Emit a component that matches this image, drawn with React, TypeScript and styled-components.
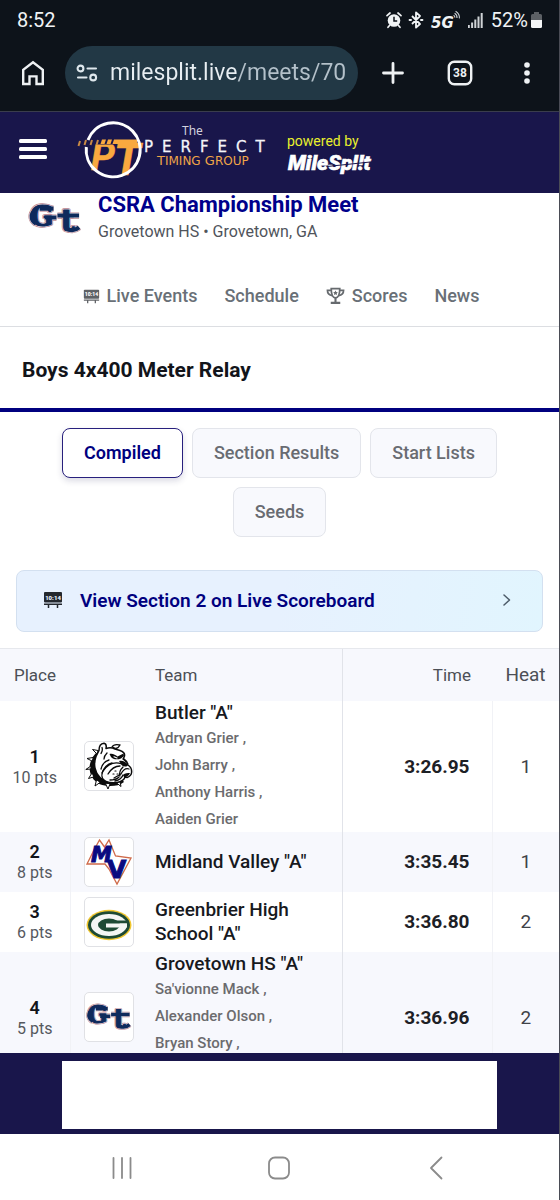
import React from 'react';
import styled, { createGlobalStyle, css } from 'styled-components';

const GlobalStyle = createGlobalStyle`
  *, *::before, *::after { box-sizing: border-box; }
  body { margin: 0; background: #fff; font-family: Roboto, "Liberation Sans", sans-serif; color: #12141a; }
  button, input { font: inherit; color: inherit; }
  svg { display: block; flex: none; }
`;

const Screen = styled.div`
  display: flex;
  flex-direction: column;
  height: 100vh;
  overflow: hidden;
  border-right: 1px solid #4a4c55;
`;

/* ---------- phone and browser chrome ---------- */

const Chrome = styled.header`
  flex: none;
  background: #0d131a;
  color: #f0f3f5;
  border-bottom: 1px solid #3a3d4c;
`;

const StatusBar = styled.div`
  display: flex;
  align-items: center;
  justify-content: space-between;
  height: 40px;
  padding: 0 16px 0 17px;
  font-size: 20px;
`;

const StatusIcons = styled.div`
  display: flex;
  align-items: center;
  gap: 6px;
`;

const BatteryGroup = styled.span`
  display: flex;
  align-items: center;
  gap: 2px;
  padding-left: 2px;
`;

const BrowserBar = styled.div`
  display: flex;
  align-items: center;
  height: 71px;
  padding: 0 16px 6px 17px;
`;

const IconButton = styled.button`
  display: flex;
  align-items: center;
  justify-content: center;
  width: 32px;
  height: 32px;
  padding: 0;
  border: 0;
  background: none;
`;

const AddressPill = styled.div`
  display: flex;
  flex: 1;
  align-items: center;
  gap: 12px;
  min-width: 0;
  height: 54px;
  margin: 0 19px 0 16px;
  padding: 0 10px 0 11px;
  border-radius: 27px;
  background: #223845;
`;

const Address = styled.input`
  flex: 1;
  min-width: 0;
  padding: 0;
  border: 0;
  outline: 0;
  font-size: 23px;
  line-height: 32px;
  color: transparent;
  background: linear-gradient(90deg, #e8eef2 127px, #b4c1ca 127px);
  background-clip: text;
  -webkit-background-clip: text;
`;

const BrowserActions = styled.div`
  display: flex;
  align-items: center;
  gap: 35px;
`;

/* ---------- site header ---------- */

const SiteHeader = styled.div`
  flex: none;
  display: flex;
  align-items: center;
  height: 81px;
  padding: 0 17px 7px;
  background: #19164b;
`;

const BrandLink = styled.a`
  margin-left: 28px;
`;

const Sponsor = styled.a`
  margin-left: 10px;
  padding-top: 13px;
  color: #fff;
  text-decoration: none;
`;

const SponsorNote = styled.span`
  display: block;
  font-size: 14px;
  line-height: 17px;
  color: #eaf02c;
`;

/* ---------- meet ---------- */

const Main = styled.main`
  flex: 1;
  min-height: 0;
  overflow: hidden;
`;

const Meet = styled.section`
  display: flex;
  align-items: center;
  gap: 15px;
  height: 52px;
  padding-left: 27px;
`;

const MeetName = styled.h1`
  margin: 0;
  font-size: 22px;
  line-height: 24px;
  font-weight: 700;
  color: #00008b;
`;

const MeetPlace = styled.p`
  margin: 0;
  padding: 4px 0 2px;
  font-size: 16px;
  line-height: 22px;
  color: #50545b;
`;

const Tabs = styled.nav`
  display: flex;
  align-items: center;
  justify-content: center;
  gap: 27px;
  height: 82px;
  padding: 21px 0 0 3px;
  border-bottom: 1px solid #dcdee2;
`;

const Tab = styled.a`
  display: flex;
  align-items: center;
  gap: 7px;
  font-size: 18px;
  line-height: 24px;
  font-weight: 500;
  color: #697077;
  text-decoration: none;
`;

const EventTitle = styled.h2`
  margin: 0;
  padding: 29px 22px 24px;
  border-bottom: 4px solid #00007f;
  font-size: 21px;
  line-height: 28px;
  font-weight: 700;
`;

const Views = styled.div`
  display: flex;
  flex-wrap: wrap;
  justify-content: center;
  gap: 9px;
  padding: 16px 16px 33px;
`;

const ViewButton = styled.button<{ $active?: boolean }>`
  height: 50px;
  padding: 0 21px 2px;
  border: 1px solid #e3e5eb;
  border-radius: 8px;
  background: #f8f9fd;
  font-size: 18px;
  font-weight: 500;
  color: #696c72;
  ${(p) =>
    p.$active &&
    css`
      border-color: #28207d;
      background: #fff;
      color: #00007f;
      font-weight: 600;
      box-shadow: 0 3px 6px rgba(30, 30, 90, 0.16);
    `}
`;

const LiveLink = styled.a`
  display: flex;
  align-items: center;
  gap: 17px;
  height: 62px;
  margin: 0 16px 16px;
  padding: 0 30px 2px 26px;
  border: 1px solid #d3e0f0;
  border-radius: 8px;
  background: linear-gradient(100deg, #e7f1fe 50%, #e1f5fe);
  font-size: 19px;
  font-weight: 600;
  color: #00007f;
  text-decoration: none;
`;

const LiveLabel = styled.span`
  flex: 1;
`;

/* ---------- results ---------- */

const Results = styled.table`
  width: 100%;
  border-collapse: collapse;
  table-layout: fixed;
`;

const Col = styled.col<{ $w?: number }>`
  ${(p) => p.$w && `width: ${p.$w}px;`}
`;

const HeadCell = styled.th<{ $align?: string; $size?: number; $ruled?: boolean }>`
  height: 52px;
  padding: 0 ${(p) => (p.$align === 'right' ? 21 : 0)}px 0 ${(p) => (p.$align === 'left' ? 8 : 0)}px;
  border-top: 1px solid #e6e8ed;
  border-left: ${(p) => (p.$ruled ? '1px solid #e1e3e9' : '0')};
  background: #f7f8fd;
  font-size: ${(p) => p.$size ?? 17}px;
  font-weight: 400;
  text-align: ${(p) => p.$align ?? 'center'};
  color: #4c4f56;
`;

const Row = styled.tr`
  height: 60px;
  &:nth-child(even) { background: #f7f8fd; }
`;

const Cell = styled.td<{ $rule?: 'soft' | 'firm' }>`
  padding: 0;
  text-align: center;
  font-size: 19px;
  color: #3f4248;
  border-left: ${(p) =>
    p.$rule === 'firm' ? '1px solid #e1e3e9' : p.$rule === 'soft' ? '1px solid #f1f2f6' : '0'};
`;

const TeamCell = styled(Cell)`
  padding-left: 8px;
  text-align: left;
`;

const TimeCell = styled(Cell)`
  padding-right: 22px;
  text-align: right;
  font-weight: 700;
  color: #1d2025;
`;

const Place = styled.div`
  padding-top: 3px;
  font-size: 18px;
  line-height: 20px;
  font-weight: 600;
  color: #12141a;
`;

const Points = styled.div`
  font-size: 16px;
  line-height: 22px;
  color: #55585e;
`;

const TeamName = styled.div`
  max-width: 160px;
  font-size: 19px;
  line-height: 24px;
  font-weight: 500;
  color: #17191e;
`;

const Runners = styled.ul`
  display: grid;
  gap: 1px;
  margin: 0;
  padding: 0;
  list-style: none;
  font-size: 15px;
  line-height: 26px;
  font-weight: 500;
  color: #6b6b6e;
`;

const LogoBox = styled.div`
  display: flex;
  align-items: center;
  justify-content: center;
  width: 50px;
  height: 50px;
  margin: 0 auto;
  border: 1px solid #e0e1e5;
  border-radius: 5px;
  background: #fff;
`;

/* ---------- bottom ---------- */

const AdBar = styled.aside`
  flex: none;
  padding: 8px 62px 5px;
  background: #19164b;
`;

const AdSlot = styled.div`
  height: 68px;
  background: #fff;
`;

const SystemNav = styled.nav`
  flex: none;
  display: grid;
  grid-template-columns: repeat(3, 1fr);
  justify-items: center;
  align-items: center;
  height: 66px;
  padding: 2px 43px 0;
  background: #fff;
  color: #8b8b8b;
`;

/* ---------- drawings ---------- */

const AlarmIcon = () => (
  <svg width="16" height="18" viewBox="0 0 16 18" fill="none">
    <circle cx="8" cy="9.5" r="6.3" fill="#f0f3f5" />
    <path d="M1 4.6 4 2M15 4.6 12 2M3.5 14.5 2 16.3M12.5 14.5l1.5 1.8" stroke="#f0f3f5" strokeWidth="1.7" strokeLinecap="round" />
    <path d="M8 5.8V10h3.2" stroke="#0d131a" strokeWidth="1.5" />
  </svg>
);

const BluetoothIcon = () => (
  <svg width="16" height="18" viewBox="0 0 16 18" fill="none" stroke="#f0f3f5" strokeWidth="1.8" strokeLinejoin="round">
    <path d="M4 5l8 8-4 3.600V1.400L12 5l-8 8" />
    <path d="M1.600 9h1.400M13 9h1.400" strokeLinecap="round" strokeWidth="2" />
  </svg>
);

const NetworkIcon = () => (
  <svg width="32" height="24" viewBox="0 0 32 24" fill="none">
    <text x="1" y="20" fontFamily="DejaVu Sans, sans-serif" fontWeight="700" fontStyle="italic" fontSize="15" fill="#f0f3f5">5G</text>
    <path d="M24.8 9.600a2.400 2.400 0 0 0-1.200-2.400M27 10a5 5 0 0 0-2.400-4.800M29.400 10.400a7.600 7.600 0 0 0-3.800-7.200" stroke="#cdd2d6" strokeWidth="1.1" />
  </svg>
);

const SignalIcon = () => (
  <svg width="15" height="18" viewBox="0 0 15 18" fill="#cfd3d6">
    <rect x="0" y="14" width="1.8" height="3" />
    <rect x="3.1" y="11.5" width="2" height="5.5" />
    <rect x="6.3" y="8.5" width="2" height="8.5" />
    <rect x="9.5" y="5.5" width="2" height="11.5" />
    <rect x="12.7" y="2" width="2" height="15" />
  </svg>
);

const BatteryIcon = () => (
  <svg width="13" height="18" viewBox="0 0 13 18">
    <path d="M4 1h5v2h1.5A1.5 1.5 0 0 1 12 4.500V9H1V4.500A1.5 1.5 0 0 1 2.500 3H4z" fill="#5c6065" />
    <path d="M1 9h11v6.500A1.500 1.500 0 0 1 10.500 17h-8A1.500 1.500 0 0 1 1 15.500z" fill="#f4f6f7" />
  </svg>
);

const HomeIcon = () => (
  <svg width="24" height="26" viewBox="0 0 24 26" fill="none" stroke="#eef1f3" strokeWidth="2.400">
    <path d="M2.200 24V9.800L12 2.300l9.800 7.500V24h-6.300v-7.600h-7V24z" />
  </svg>
);

const TuneIcon = () => (
  <svg width="22" height="18" viewBox="0 0 22 18" fill="none" stroke="#dfe8ed" strokeWidth="2.100" strokeLinecap="round">
    <circle cx="4.500" cy="4.500" r="2.900" />
    <path d="M11.500 4.500h8.500M2 13.500h8.500" />
    <circle cx="17.200" cy="13.500" r="2.900" />
  </svg>
);

const PlusIcon = () => (
  <svg width="24" height="24" viewBox="0 0 24 24" stroke="#eef1f3" strokeWidth="2.800" strokeLinecap="round">
    <path d="M12 2.500v19M2.500 12h19" />
  </svg>
);

const TabCountIcon = () => (
  <svg width="26" height="26" viewBox="0 0 26 26">
    <rect x="1.800" y="1.800" width="22.400" height="22.400" rx="5.500" fill="none" stroke="#eef1f3" strokeWidth="2.400" />
    <text x="13" y="17.200" textAnchor="middle" fontFamily="Roboto, sans-serif" fontWeight="700" fontSize="12" fill="#eef1f3">38</text>
  </svg>
);

const DotsIcon = () => (
  <svg width="8" height="24" viewBox="0 0 8 24" fill="#eef1f3">
    <circle cx="4" cy="4" r="2.800" />
    <circle cx="4" cy="12" r="2.800" />
    <circle cx="4" cy="20" r="2.800" />
  </svg>
);

const MenuIcon = () => (
  <svg width="32" height="24" viewBox="0 0 32 24" fill="#fff">
    <rect x="2" y="2" width="28" height="4" rx="1.500" />
    <rect x="2" y="10" width="28" height="4" rx="1.500" />
    <rect x="2" y="18" width="28" height="4" rx="1.500" />
  </svg>
);

const TimingLogo = () => (
  <svg width="200" height="72" viewBox="0 -8 200 72">
    <text x="14" y="49" fontFamily="Roboto, sans-serif" fontWeight="700" fontStyle="italic" fontSize="38" fill="#f9a93f" stroke="#f9a93f" strokeWidth="0.500">P</text>
    <text x="37" y="54" fontFamily="Roboto, sans-serif" fontWeight="700" fontStyle="italic" fontSize="44" fill="#f9a93f" stroke="#f9a93f" strokeWidth="0.500">T</text>
    <path d="M3 20.500h34" stroke="#19164b" strokeWidth="6" />
    <path d="M3 20l-1.500 5M9 19l-1.500 5M15 19l-1.500 5M21 19l-1.500 5" stroke="#c98a45" strokeWidth="2" />
    <path d="M25 18.500h4l-1.500 4.500h-4zM31 18.500h4l-1.500 4.500h-4zM37 18.500h24l-1.500 4.500H35.500z" fill="#f9a93f" />
    <path d="M9.300 26A27 27 0 1 0 11 19" fill="none" stroke="#fff" strokeWidth="3" />
    <text x="105" y="14" fontFamily="Noto Sans, sans-serif" fontSize="12" fill="#d3d2df">The</text>
    <text x="67" y="31" fontFamily="DejaVu Sans, sans-serif" fontSize="15" letterSpacing="9" fill="#f4f4f8" stroke="#f4f4f8" strokeWidth="0.300">PERFECT</text>
    <text x="80" y="44" fontFamily="DejaVu Sans, sans-serif" fontSize="13" fill="#f0a548">
      T<tspan fontSize="12">IMING</tspan> G<tspan fontSize="12">ROUP</tspan>
    </text>
  </svg>
);

const MileSplitLogo = () => (
  <svg width="96" height="28" viewBox="0 -2 96 28">
    <text x="1" y="18" fontFamily="Roboto, sans-serif" fontWeight="900" fontStyle="italic" fontSize="21" fill="#fff" stroke="#fff" strokeWidth="0.600">MileSpl!t</text>
    <path d="M40 14.500 88 9.500" stroke="#19164b" strokeWidth="1" />
  </svg>
);

/* One coloured layer of the Grovetown mark: the letters plus their long slab bars. */
const GtLayer = ({ color, spread }: { color: string; spread: number }) => (
  <g fill={color} stroke={color}>
    <g strokeWidth={spread}>
      <text x="2" y="23" fontSize="28">G</text>
      <text x="33" y="28" fontSize="31">t</text>
    </g>
    <g fill="none" strokeWidth={spread + 3}>
      <path d="M17 14.500h12M12 5.500h14M30 12.500h22" />
      <path d="M5 9c-2.500 4-1.500 9 3 11.500M41 26.500c4 1.500 8 .5 11-2" />
    </g>
  </g>
);

const GtLogo = ({ width }: { width: number }) => (
  <svg width={width} height={Math.round(width * 0.6)} viewBox="-1 -1 57 34" fontFamily="DejaVu Serif, serif" fontWeight="700" strokeLinejoin="round">
    <GtLayer color="#b9848f" spread={3.4} />
    <GtLayer color="#e9dde2" spread={2.2} />
    <GtLayer color="#0e2a5c" spread={1.2} />
  </svg>
);

const BulldogLogo = () => (
  <svg width="48" height="48" viewBox="0 0 48 48" strokeLinejoin="round" strokeLinecap="round">
    <path d="M13 9C5 16 2 26 7 35c4 7 11 9 18 9 6 0 10-1 14-4l-4-5-15 1-8-9z" fill="#0b0b0b" />
    <g fill="#fff" stroke="#0b0b0b" strokeWidth="1">
      <path d="M11.500 11.500 7.500 7.500 13 8.500z" />
      <path d="M7 19 2 16.500 8 15.500z" />
      <path d="M5.500 27 .8 27.500 6 24z" />
      <path d="M8.500 35 3.500 36.500 7 31z" />
      <path d="M15 40.500 10 44 11.500 38z" />
      <path d="M25 42 23 47 20.500 41.500z" />
      <path d="M35 39.500 36 44.500 31 40.500z" />
    </g>
    <path d="M14 8.500c0-4 2-7 5-7.300 2 .5 2.500 3 2 5.300 3-1 6-1 9 .5l5 1.500c3 1 5 3 4.500 5.500l-1 2.500c3 2 4 4 4.500 6.500 3 2 4 5 3.500 8-.5 3-3 4-4.500 4.500l-2-1c0 3-4 5.500-8 6-8 1-13-1-17-5-5-5-7-13-4-21z" fill="#fff" stroke="#0b0b0b" strokeWidth="1.500" />
    <path d="M27 5c2-3.500 5-2.500 8-2-1 2-2 3-4 3.500z" fill="#fff" stroke="#0b0b0b" strokeWidth="1.300" />
    <path d="M24.500 12c3-1 6 1 8 2.500l6-3 .5 2.500-3 2.500c-4 1.500-8 1-10-1.500z" fill="#0b0b0b" />
    <path d="M29 14.800 32 16" stroke="#fff" strokeWidth="1.200" />
    <path d="M34 19c4-1 7 1 9 4-1 2-4 2-6 .5z" fill="#0b0b0b" />
    <g fill="none" stroke="#0b0b0b" strokeWidth="1.300">
      <path d="M37 22c-8-3-14 0-19 7-2 4-1 8 2 10" />
      <path d="M35 24c-5 0-9 3-12 8M38 25c-3 3-4 6-3 9M44 27c-3-1-6 1-8 5l-7 4" />
      <path d="M17 5.500c1 3 0 4-1 6M22 11c-2 2-3 4-3 6M24 18c-4 1-7 5-8 9M27 21c-4 1-8 5-10 10" />
      <path d="M30 39c4-1 7-3 8-6M25 38c4 0 7-1 9-3M38 17c1 1 2 1 3 3" />
    </g>
    <path d="M30 29h1M28 32h1M32 32h1" stroke="#0b0b0b" strokeWidth="1.200" />
    <path d="M38 33c2-2 5-2 7-2-1 3-4 4-6 4z" fill="#0b0b0b" />
  </svg>
);

const MidlandLogo = () => (
  <svg width="48" height="48" viewBox="0 0 48 48">
    <path d="M2 26 9 12 14.500 2l5 7L24 2l6.500 16L46 20 32 46l-8-15-4-5z" fill="#fff" stroke="#cf6a49" strokeWidth="1.300" />
    <g fontFamily="DejaVu Sans, sans-serif" fontWeight="700" fill="#0a0a80" stroke="#0a0a80" strokeWidth="1">
      <text x="6" y="24" fontSize="21" fontStyle="italic">M</text>
      <text x="22" y="40" fontSize="25">V</text>
    </g>
  </svg>
);

const GreenbrierLogo = () => (
  <svg width="48" height="48" viewBox="0 0 48 48">
    <ellipse cx="24" cy="27" rx="22.500" ry="15.200" fill="#f0c62e" />
    <ellipse cx="24" cy="27" rx="21" ry="13.700" fill="#1d4a34" />
    <ellipse cx="24" cy="27" rx="18" ry="11" fill="#f4f6f4" />
    <ellipse cx="24" cy="27" rx="11" ry="6.500" fill="#1d4a34" />
    <rect x="30" y="22.500" width="13.500" height="3" fill="#1d4a34" />
    <rect x="21" y="25.500" width="21" height="4" fill="#f4f6f4" />
  </svg>
);

const ScoreboardIcon = ({ size, color, ground }: { size: number; color: string; ground: string }) => (
  <svg width={size} height={size} viewBox="0 0 20 20">
    <rect x="1" y="2" width="18" height="10.500" rx="1" fill={color} />
    <path d="M1 14.200h18M5.500 14v4M14.500 14v4" stroke={color} strokeWidth="1.500" />
    <text x="10" y="9.600" textAnchor="middle" fontFamily="Roboto, sans-serif" fontWeight="900" fontSize="6" fill={ground}>10:14</text>
  </svg>
);

const TrophyIcon = () => (
  <svg width="19" height="18" viewBox="0 0 20 18" fill="none" stroke="#666a6e" strokeWidth="1.800">
    <path d="M5.500 1.200h9c0 6-1.500 9.800-4.500 9.800S5.500 7.200 5.500 1.200z" />
    <path d="M5.700 3H1.500c0 3 2 5.200 5.200 5.500M14.300 3h4.200c0 3-2 5.200-5.200 5.500" />
    <path d="M10 11v4M5 16.200h10" strokeWidth="2.200" />
    <path d="m10 3.200.8 1.500 1.700.3-1.200 1.200.3 1.700-1.600-.8-1.600.8.300-1.700L7.500 5l1.700-.3z" fill="#666a6e" stroke="none" />
  </svg>
);

const ChevronIcon = () => (
  <svg width="10" height="14" viewBox="0 0 10 14" fill="none" stroke="#4c5a68" strokeWidth="1.500" strokeLinecap="round" strokeLinejoin="round">
    <path d="M2 2l5.500 5L2 12" />
  </svg>
);

const RecentsIcon = () => (
  <svg width="22" height="24" viewBox="0 0 22 24" stroke="currentColor" strokeWidth="1.800" strokeLinecap="round">
    <path d="M2.500 2v20M11 2v20M19.500 2v20" />
  </svg>
);

const HomeKeyIcon = () => (
  <svg width="24" height="24" viewBox="0 0 24 24" fill="none" stroke="currentColor" strokeWidth="1.800">
    <rect x="2" y="1.500" width="20" height="21" rx="6" />
  </svg>
);

const BackIcon = () => (
  <svg width="16" height="24" viewBox="0 0 16 24" fill="none" stroke="currentColor" strokeWidth="1.800" strokeLinecap="round" strokeLinejoin="round">
    <path d="M12.500 1.500 2 12l10.500 10.500" />
  </svg>
);

/* ---------- data ---------- */

type Result = {
  place: number;
  points: number;
  team: string;
  logo: React.ReactNode;
  runners?: string[];
  time: string;
  heat: number;
};

const results: Result[] = [
  { place: 1, points: 10, team: 'Butler "A"', logo: <BulldogLogo />, runners: ['Adryan Grier', 'John Barry', 'Anthony Harris', 'Aaiden Grier'], time: '3:26.95', heat: 1 },
  { place: 2, points: 8, team: 'Midland Valley "A"', logo: <MidlandLogo />, time: '3:35.45', heat: 1 },
  { place: 3, points: 6, team: 'Greenbrier High School "A"', logo: <GreenbrierLogo />, time: '3:36.80', heat: 2 },
  { place: 4, points: 5, team: 'Grovetown HS "A"', logo: <GtLogo width={48} />, runners: ['Sa\'vionne Mack', 'Alexander Olson', 'Bryan Story', ''], time: '3:36.96', heat: 2 },
];

const views = ['Compiled', 'Section Results', 'Start Lists', 'Seeds'];

export default function App() {
  return (
    <Screen>
      <GlobalStyle />
      <Chrome>
        <StatusBar>
          <span>8:52</span>
          <StatusIcons>
            <AlarmIcon />
            <BluetoothIcon />
            <NetworkIcon />
            <SignalIcon />
            <BatteryGroup>52%<BatteryIcon /></BatteryGroup>
          </StatusIcons>
        </StatusBar>
        <BrowserBar>
          <IconButton aria-label="Home"><HomeIcon /></IconButton>
          <AddressPill>
            <TuneIcon />
            <Address aria-label="Address" defaultValue="milesplit.live/meets/70" />
          </AddressPill>
          <BrowserActions>
            <IconButton aria-label="New tab"><PlusIcon /></IconButton>
            <IconButton aria-label="Open tabs"><TabCountIcon /></IconButton>
            <IconButton aria-label="More"><DotsIcon /></IconButton>
          </BrowserActions>
        </BrowserBar>
      </Chrome>

      <SiteHeader>
        <IconButton aria-label="Menu"><MenuIcon /></IconButton>
        <BrandLink href="#home" aria-label="The Perfect Timing Group"><TimingLogo /></BrandLink>
        <Sponsor href="#milesplit">
          <SponsorNote>powered by</SponsorNote>
          <MileSplitLogo />
        </Sponsor>
      </SiteHeader>

      <Main>
        <Meet>
          <GtLogo width={56} />
          <div>
            <MeetName>CSRA Championship Meet</MeetName>
            <MeetPlace>Grovetown HS • Grovetown, GA</MeetPlace>
          </div>
        </Meet>
        <Tabs>
          <Tab href="#live"><ScoreboardIcon size={17} color="#5f6266" ground="#fff" />Live Events</Tab>
          <Tab href="#schedule">Schedule</Tab>
          <Tab href="#scores"><TrophyIcon />Scores</Tab>
          <Tab href="#news">News</Tab>
        </Tabs>
        <EventTitle>Boys 4x400 Meter Relay</EventTitle>
        <Views>
          {views.map((v, i) => (
            <ViewButton key={v} $active={i === 0}>{v}</ViewButton>
          ))}
        </Views>
        <LiveLink href="#scoreboard">
          <ScoreboardIcon size={20} color="#24282e" ground="#e7f1fe" />
          <LiveLabel>View Section 2 on Live Scoreboard</LiveLabel>
          <ChevronIcon />
        </LiveLink>
        <Results>
          <colgroup>
            <Col $w={70} />
            <Col $w={77} />
            <Col />
            <Col $w={150} />
            <Col $w={67} />
          </colgroup>
          <thead>
            <tr>
              <HeadCell>Place</HeadCell>
              <HeadCell aria-label="Logo" />
              <HeadCell $align="left">Team</HeadCell>
              <HeadCell $align="right" $ruled>Time</HeadCell>
              <HeadCell $size={19}>Heat</HeadCell>
            </tr>
          </thead>
          <tbody>
            {results.map((r) => (
              <Row key={r.place}>
                <Cell>
                  <Place>{r.place}</Place>
                  <Points>{r.points} pts</Points>
                </Cell>
                <Cell $rule="soft"><LogoBox>{r.logo}</LogoBox></Cell>
                <TeamCell>
                  <TeamName>{r.team}</TeamName>
                  {r.runners && (
                    <Runners>
                      {r.runners.map((name, i) => (
                        <li key={i}>{name}{i < 3 ? ' ,' : '\u00a0'}</li>
                      ))}
                    </Runners>
                  )}
                </TeamCell>
                <TimeCell $rule="firm">{r.time}</TimeCell>
                <Cell $rule="soft">{r.heat}</Cell>
              </Row>
            ))}
          </tbody>
        </Results>
      </Main>

      <AdBar><AdSlot /></AdBar>
      <SystemNav>
        <IconButton aria-label="Recent apps"><RecentsIcon /></IconButton>
        <IconButton aria-label="Home screen"><HomeKeyIcon /></IconButton>
        <IconButton aria-label="Back"><BackIcon /></IconButton>
      </SystemNav>
    </Screen>
  );
}
